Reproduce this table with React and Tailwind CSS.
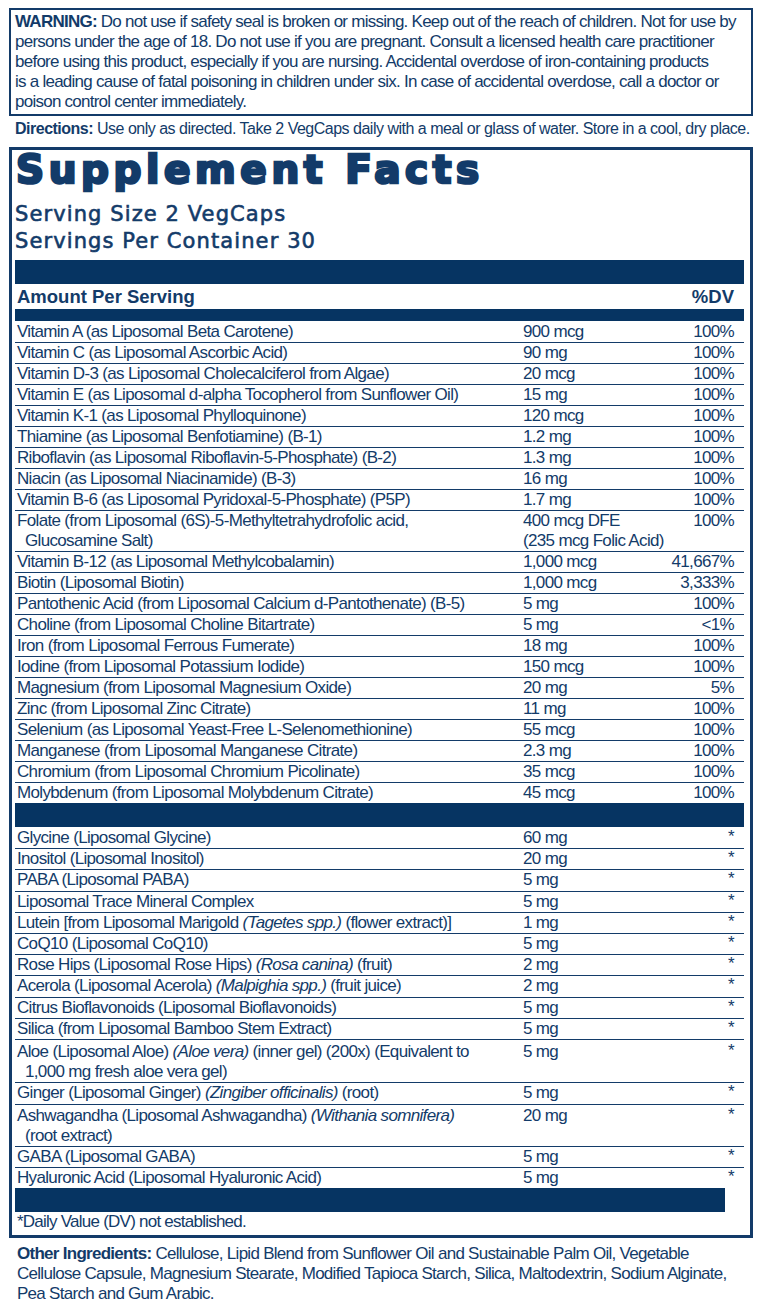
import React from "react";

const NAVY = "text-[#133b69]";

const groupOne = [
  [["Vitamin A (as Liposomal Beta Carotene)"], ["900 mcg"], "100%"],
  [["Vitamin C (as Liposomal Ascorbic Acid)"], ["90 mg"], "100%"],
  [["Vitamin D-3 (as Liposomal Cholecalciferol from Algae)"], ["20 mcg"], "100%"],
  [["Vitamin E (as Liposomal d-alpha Tocopherol from Sunflower Oil)"], ["15 mg"], "100%"],
  [["Vitamin K-1 (as Liposomal Phylloquinone)"], ["120 mcg"], "100%"],
  [["Thiamine (as Liposomal Benfotiamine) (B-1)"], ["1.2 mg"], "100%"],
  [["Riboflavin (as Liposomal Riboflavin-5-Phosphate) (B-2)"], ["1.3 mg"], "100%"],
  [["Niacin (as Liposomal Niacinamide) (B-3)"], ["16 mg"], "100%"],
  [["Vitamin B-6 (as Liposomal Pyridoxal-5-Phosphate) (P5P)"], ["1.7 mg"], "100%"],
  [
    ["Folate (from Liposomal (6S)-5-Methyltetrahydrofolic acid,", "Glucosamine Salt)"],
    ["400 mcg DFE", "(235 mcg Folic Acid)"],
    "100%",
  ],
  [["Vitamin B-12 (as Liposomal Methylcobalamin)"], ["1,000 mcg"], "41,667%"],
  [["Biotin (Liposomal Biotin)"], ["1,000 mcg"], "3,333%"],
  [["Pantothenic Acid (from Liposomal Calcium d-Pantothenate) (B-5)"], ["5 mg"], "100%"],
  [["Choline (from Liposomal Choline Bitartrate)"], ["5 mg"], "<1%"],
  [["Iron (from Liposomal Ferrous Fumerate)"], ["18 mg"], "100%"],
  [["Iodine (from Liposomal Potassium Iodide)"], ["150 mcg"], "100%"],
  [["Magnesium (from Liposomal Magnesium Oxide)"], ["20 mg"], "5%"],
  [["Zinc (from Liposomal Zinc Citrate)"], ["11 mg"], "100%"],
  [["Selenium (as Liposomal Yeast-Free L-Selenomethionine)"], ["55 mcg"], "100%"],
  [["Manganese (from Liposomal Manganese Citrate)"], ["2.3 mg"], "100%"],
  [["Chromium (from Liposomal Chromium Picolinate)"], ["35 mcg"], "100%"],
  [["Molybdenum (from Liposomal Molybdenum Citrate)"], ["45 mcg"], "100%"],
];

const I = ({ children }) => <i>{children}</i>;

// [name lines, amount, extra top padding]
const groupTwo = [
  [["Glycine (Liposomal Glycine)"], "60 mg"],
  [["Inositol (Liposomal Inositol)"], "20 mg"],
  [["PABA (Liposomal PABA)"], "5 mg"],
  [["Liposomal Trace Mineral Complex"], "5 mg"],
  [
    [
      <>
        Lutein [from Liposomal Marigold <I>(Tagetes spp.)</I> (flower extract)]
      </>,
    ],
    "1 mg",
  ],
  [["CoQ10 (Liposomal CoQ10)"], "5 mg"],
  [
    [
      <>
        Rose Hips (Liposomal Rose Hips) <I>(Rosa canina)</I> (fruit)
      </>,
    ],
    "2 mg",
  ],
  [
    [
      <>
        Acerola (Liposomal Acerola) <I>(Malpighia spp.)</I> (fruit juice)
      </>,
    ],
    "2 mg",
  ],
  [["Citrus Bioflavonoids (Liposomal Bioflavonoids)"], "5 mg"],
  [["Silica (from Liposomal Bamboo Stem Extract)"], "5 mg"],
  [
    [
      <>
        Aloe (Liposomal Aloe) <I>(Aloe vera)</I> (inner gel) (200x) (Equivalent to
      </>,
      "1,000 mg fresh aloe vera gel)",
    ],
    "5 mg",
    "pt-[2px]",
  ],
  [
    [
      <>
        Ginger (Liposomal Ginger) <I>(Zingiber officinalis)</I> (root)
      </>,
    ],
    "5 mg",
  ],
  [
    [
      <>
        Ashwagandha (Liposomal Ashwagandha) <I>(Withania somnifera)</I>
      </>,
      "(root extract)",
    ],
    "20 mg",
    "pt-[1px]",
  ],
  [["GABA (Liposomal GABA)"], "5 mg"],
  [["Hyaluronic Acid (Liposomal Hyaluronic Acid)"], "5 mg"],
];

function Lines({ lines, indent }) {
  return lines.map((l, i) => (
    <div key={i} className={indent && i > 0 ? "pl-[8px]" : ""}>
      {l}
    </div>
  ));
}

function Row({ name, amount, dv, last, pad, star, lead }) {
  return (
    <div
      className={
        "grid grid-cols-[508px_1fr_auto] whitespace-nowrap " +
        lead +
        (last ? " " : " border-b border-[#133b69] ") +
        (pad || "")
      }
    >
      <div className="pl-[2px]">
        <Lines lines={name} indent />
      </div>
      <div>
        <Lines lines={amount} />
      </div>
      <div className={"pr-[10px] text-right " + (star ? "leading-[18px]" : "")}>
        {dv}
      </div>
    </div>
  );
}

export default function App() {
  return (
    <div
      className={
        "w-[762px] h-[1302px] overflow-hidden bg-white pt-[8px] font-['Liberation_Sans',Arial,sans-serif] " +
        NAVY
      }
    >
      <div className="mx-[9px] whitespace-nowrap border-2 border-[#133b69] px-[4px] py-[2px] text-[17px] leading-[20px] tracking-[-0.75px]">
        <span className="font-bold">WARNING:</span> Do not use if safety seal is broken or
        missing. Keep out of the reach of children. Not for use by
        <br />
        persons under the age of 18. Do not use if you are pregnant. Consult a licensed health
        care practitioner
        <br />
        before using this product, especially if you are nursing. Accidental overdose of
        iron-containing products
        <br />
        is a leading cause of fatal poisoning in children under six. In case of accidental
        overdose, call a doctor or
        <br />
        poison control center immediately.
      </div>

      <p className="whitespace-nowrap px-[15px] pt-[3px] text-[16px] leading-[20px] tracking-[-0.5px]">
        <span className="font-bold">Directions:</span> Use only as directed. Take 2 VegCaps
        daily with a meal or glass of water. Store in a cool, dry place.
      </p>

      <div className="mx-[9px] mt-[8px] border-[3px] border-[#133b69] pb-[3px] pl-[3px] pr-[6px] text-[17px] leading-[20px] tracking-[-0.66px]">
        <h1 className="whitespace-nowrap pl-[1px] font-['DejaVu_Sans',sans-serif] text-[39px] font-bold leading-[40px] tracking-[4.6px] [-webkit-text-stroke:2.6px_#133b69]">
          Supplement Facts
        </h1>
        <div className="mt-[11px] font-['DejaVu_Sans',sans-serif] text-[21px] leading-[27px] tracking-[1.1px] [-webkit-text-stroke:0.6px_#133b69]">
          <div>Serving Size 2 VegCaps</div>
          <div>Servings Per Container 30</div>
        </div>

        <div className="mt-[5px] h-[24px] bg-[#063462]" />
        <div className="flex h-[25px] items-center justify-between pl-[2px] pr-[10px] text-[18.5px] font-bold tracking-normal">
          <span>Amount Per Serving</span>
          <span>%DV</span>
        </div>
        <div className="h-[12px] bg-[#063462]" />

        <div className="pt-[1px]">
          {groupOne.map(([name, amount, dv], i) => (
            <Row
              key={i}
              name={name}
              amount={amount}
              dv={dv}
              lead="leading-[20px]"
              last={i === groupOne.length - 1}
            />
          ))}
        </div>

        <div className="h-[24px] bg-[#063462]" />

        <div className="pt-[1px]">
          {groupTwo.map(([name, amount, pad], i) => (
            <Row
              key={i}
              name={name}
              amount={[amount]}
              dv="*"
              star
              lead="leading-[20.2px]"
              pad={pad}
              last={i === groupTwo.length - 1}
            />
          ))}
        </div>

        <div className="mr-[19px] h-[24px] bg-[#063462]" />
        <div className="pl-[2px] tracking-[-0.76px]">*Daily Value (DV) not established.</div>
      </div>

      <p className="whitespace-nowrap px-[17px] pt-[6px] text-[17px] leading-[20px] tracking-[-0.72px]">
        <span className="font-bold">Other Ingredients:</span> Cellulose, Lipid Blend from
        Sunflower Oil and Sustainable Palm Oil, Vegetable
        <br />
        Cellulose Capsule, Magnesium Stearate, Modified Tapioca Starch, Silica, Maltodextrin,
        Sodium Alginate,
        <br />
        Pea Starch and Gum Arabic.
      </p>
    </div>
  );
}
